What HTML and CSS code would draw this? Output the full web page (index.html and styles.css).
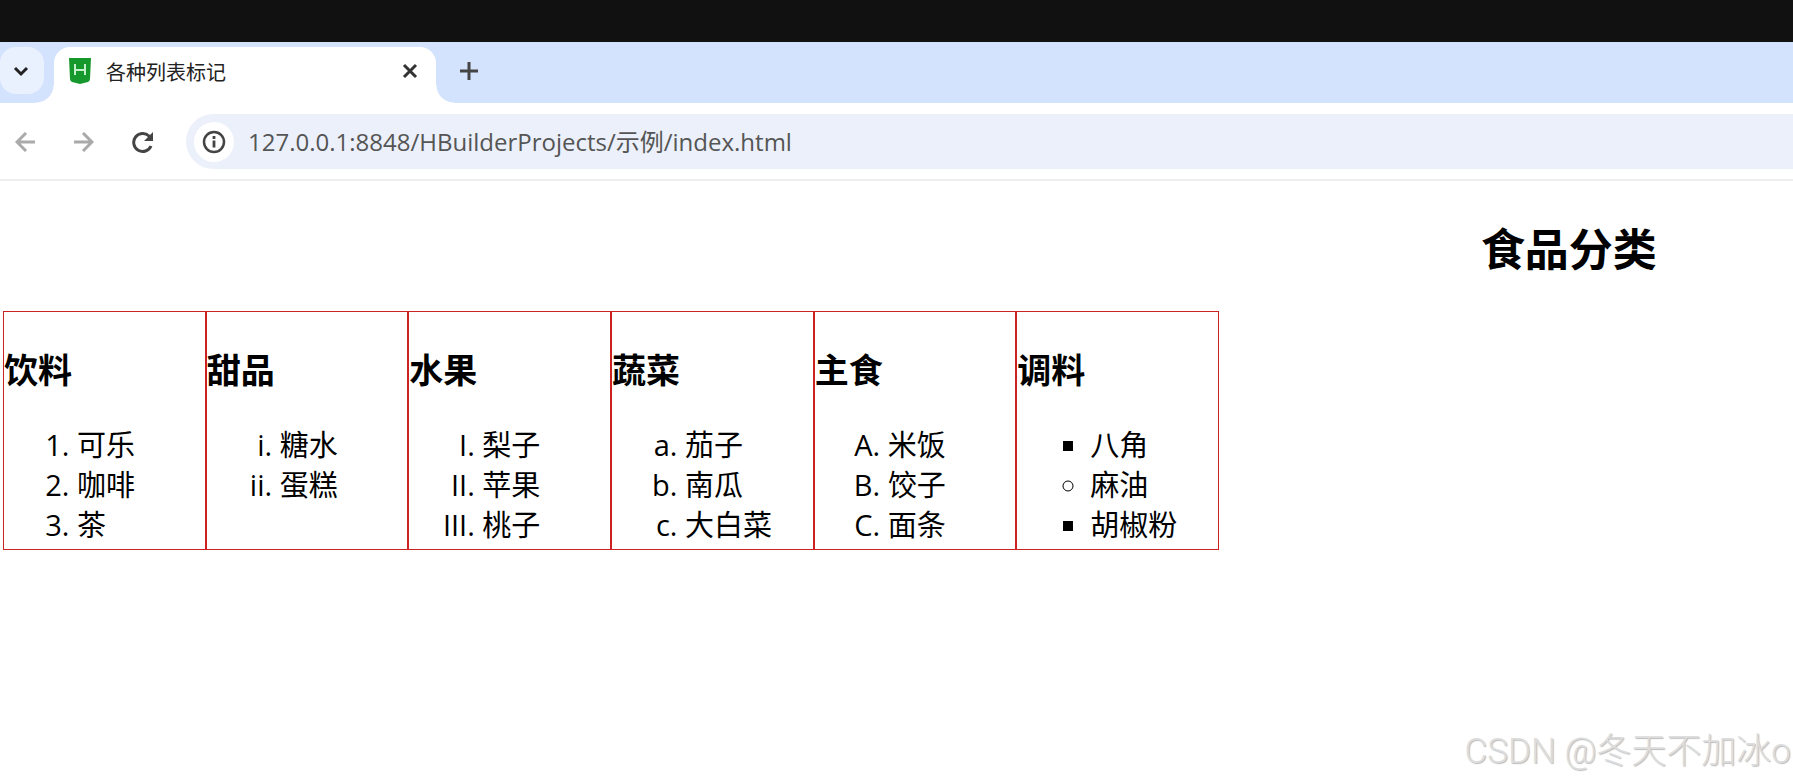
FILE: index.html
```html
<!DOCTYPE html>
<html lang="zh-CN">
<head>
    <meta charset="UTF-8">
    <meta name="viewport" content="width=device-width, initial-scale=1.0">
    <title>各种列表标记</title>
    <link rel="stylesheet" href="styles.css">
</head>
<body>
    <div class="top-edge"></div>
    <header class="browser">
        <div class="tab-strip">
            <button class="tab-search" aria-label="搜索标签页">
                <svg width="16" height="16" viewBox="0 0 16 16"><path d="M2 5l6 6 6-6" fill="none" stroke="#222" stroke-width="3"/></svg>
            </button>
            <div class="tab">
                <svg class="favicon" width="24" height="28" viewBox="0 0 24 28">
                    <path d="M1 1h22l-1 21q0 2-2 3l-8 2-8-2q-2-1-2-3z" fill="#16992c"/>
                    <path d="M7 7v11M17 7v11M7 13h10" fill="none" stroke="#c3f0ca" stroke-width="2"/>
                </svg>
                <span class="tab-title">各种列表标记</span>
                <button class="icon-button" aria-label="关闭">
                    <svg width="16" height="16" viewBox="0 0 16 16"><path d="M2 2l12 12M14 2L2 14" fill="none" stroke="#333" stroke-width="3"/></svg>
                </button>
            </div>
            <button class="icon-button new-tab" aria-label="新标签页">
                <svg width="18" height="18" viewBox="0 0 18 18"><path d="M9 0v18M0 9h18" fill="none" stroke="#444" stroke-width="3"/></svg>
            </button>
        </div>
        <div class="toolbar">
            <button class="icon-button" aria-label="后退">
                <svg width="20" height="20" viewBox="0 0 20 20"><path d="M20 10H2M11 1l-9 9 9 9" fill="none" stroke="#aaa" stroke-width="3"/></svg>
            </button>
            <button class="icon-button" aria-label="前进">
                <svg width="20" height="20" viewBox="0 0 20 20"><path d="M0 10h18M9 1l9 9-9 9" fill="none" stroke="#aaa" stroke-width="3"/></svg>
            </button>
            <button class="icon-button" aria-label="刷新">
                <svg width="22" height="22" viewBox="0 0 22 22">
                    <path d="M19 15A9 9 0 1 1 17 5L20 8" fill="none" stroke="#444" stroke-width="3"/>
                    <path d="M21 1v9h-9z" fill="#444"/>
                </svg>
            </button>
            <div class="address-bar">
                <button class="site-info" aria-label="查看网站信息">
                    <svg width="24" height="24" viewBox="0 0 24 24">
                        <circle cx="12" cy="12" r="10" fill="none" stroke="#444" stroke-width="2.500"/>
                        <path d="M12 10.500v7M12 6v3" fill="none" stroke="#444" stroke-width="2.800"/>
                    </svg>
                </button>
                <input type="text" class="address" aria-label="地址" value="127.0.0.1:8848/HBuilderProjects/示例/index.html">
            </div>
        </div>
    </header>

    <main class="content">
        <h1>食品分类</h1>
        <div class="boxes">
            <section class="box">
                <h3>饮料</h3>
                <ol>
                    <li>可乐</li>
                    <li>咖啡</li>
                    <li>茶</li>
                </ol>
            </section>
            <section class="box">
                <h3>甜品</h3>
                <ol type="i">
                    <li>糖水</li>
                    <li>蛋糕</li>
                </ol>
            </section>
            <section class="box">
                <h3>水果</h3>
                <ol type="I">
                    <li>梨子</li>
                    <li>苹果</li>
                    <li>桃子</li>
                </ol>
            </section>
            <section class="box">
                <h3>蔬菜</h3>
                <ol type="a">
                    <li>茄子</li>
                    <li>南瓜</li>
                    <li>大白菜</li>
                </ol>
            </section>
            <section class="box">
                <h3>主食</h3>
                <ol type="A">
                    <li>米饭</li>
                    <li>饺子</li>
                    <li>面条</li>
                </ol>
            </section>
            <section class="box">
                <h3>调料</h3>
                <ul>
                    <li class="square">八角</li>
                    <li class="circle">麻油</li>
                    <li class="square">胡椒粉</li>
                </ul>
            </section>
        </div>
    </main>
    <div class="watermark">CSDN @冬天不加冰o</div>
</body>
</html>
```
FILE: styles.css
```css
body {
    margin: 0;
    min-height: 100vh;
    position: relative;
    background-color: #fff;
    color: #000;
    font-family: "Open Sans", "Noto Sans CJK SC", sans-serif;
}
button {
    display: flex;
    align-items: center;
    justify-content: center;
    padding: 0;
    border: none;
    background: none;
    cursor: pointer;
}
.top-edge {
    height: 42px;
    background-color: #111;
}

/* browser */
.tab-strip {
    display: flex;
    height: 56px;
    padding-top: 5px;
    background-color: #d3e2fd;
}
.tab-search {
    width: 44px;
    height: 47px;
    border-radius: 16px;
    background-color: #eaf1fe;
}
.tab-search svg {
    margin-right: 2px;
}
.tab {
    position: relative;
    display: flex;
    align-items: center;
    box-sizing: border-box;
    width: 382px;
    height: 56px;
    margin-left: 10px;
    padding: 0 14px 8px 14px;
    border-radius: 16px 16px 0 0;
    background-color: #fff;
}
.tab::before,
.tab::after {
    content: "";
    position: absolute;
    bottom: 0;
    width: 18px;
    height: 18px;
}
.tab::before {
    right: 100%;
    background: radial-gradient(circle at 0 0, transparent 17px, #fff 18px);
}
.tab::after {
    left: 100%;
    background: radial-gradient(circle at 100% 0, transparent 17px, #fff 18px);
}
.tab-title {
    flex: 1;
    margin-left: 14px;
    font-size: 20px;
    color: #222;
}
.icon-button {
    width: 24px;
    height: 24px;
}
.new-tab {
    margin: 12px 0 0 21px;
}
.toolbar {
    display: flex;
    align-items: center;
    gap: 35px;
    padding: 11px 0 10px 13px;
    border-bottom: 2px solid #eee;
}
.address-bar {
    flex: 1;
    display: flex;
    align-items: center;
    gap: 14px;
    height: 55px;
    margin-left: -4px;
    padding-left: 8px;
    border-radius: 28px 0 0 28px;
    background-color: #ebf0fa;
}
.site-info {
    width: 40px;
    height: 40px;
    border-radius: 50%;
    background-color: #fff;
}
.address {
    flex: 1;
    padding: 0 0 3px;
    border: none;
    outline: none;
    background: none;
    font-family: inherit;
    font-size: 24px;
    color: #555;
}

/* page */
.content {
    padding: 40px 3px 0;
}
h1 {
    margin: 0 0 34px;
    padding-left: 75vw;
    font-size: 44px;
    line-height: 56px;
    text-align: center;
}
.boxes {
    display: grid;
    grid-template-columns: repeat(6, 1fr);
    width: 1216px;
}
.box {
    padding-bottom: 4px;
    border: 1px solid #c22;
}
h3 {
    margin: 35px 0 32px;
    font-size: 34px;
    line-height: 46px;
}
ol,
ul {
    margin: 0;
    padding-left: 73px;
    font-size: 29px;
    line-height: 40px;
}
.square {
    list-style-type: square;
}
.circle {
    list-style-type: circle;
}

.watermark {
    position: absolute;
    right: 2px;
    bottom: 7px;
    font-family: Roboto, "Noto Sans CJK SC", sans-serif;
    font-size: 35px;
    font-weight: 300;
    line-height: 44px;
    color: #ddd;
    text-shadow: 1px 1px 1px #bbb;
}
```
